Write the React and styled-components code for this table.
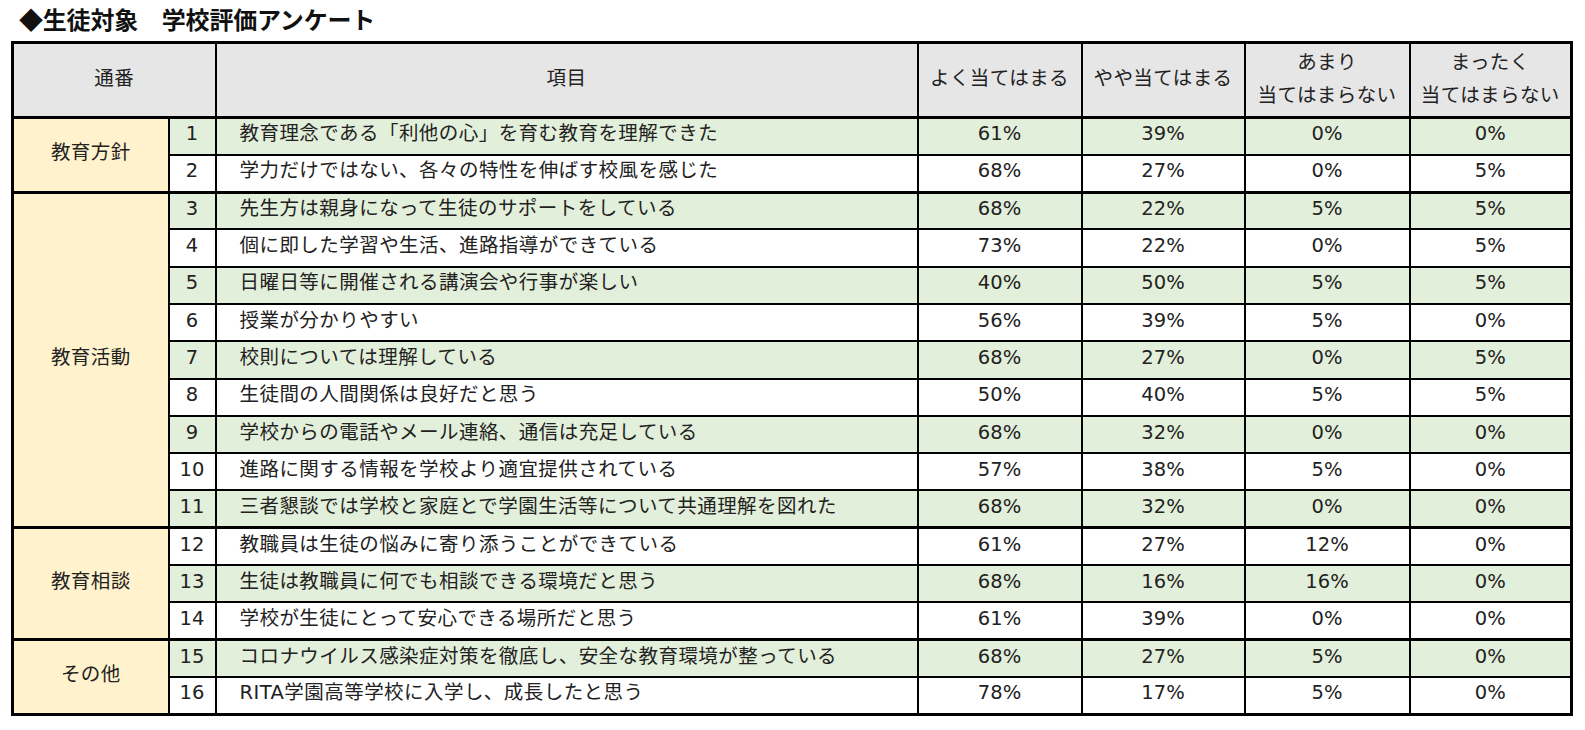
import React from 'react';
import styled, { createGlobalStyle } from 'styled-components';

const GlobalStyle = createGlobalStyle`
  body {
    margin: 0;
    background: #fff;
    font-family: "DejaVu Sans", "Noto Sans CJK JP", sans-serif;
    color: #222;
  }
`;

const groups = [
  {
    name: '教育方針',
    rows: [
      ['教育理念である「利他の心」を育む教育を理解できた', '61%', '39%', '0%', '0%'],
      ['学力だけではない、各々の特性を伸ばす校風を感じた', '68%', '27%', '0%', '5%'],
    ],
  },
  {
    name: '教育活動',
    rows: [
      ['先生方は親身になって生徒のサポートをしている', '68%', '22%', '5%', '5%'],
      ['個に即した学習や生活、進路指導ができている', '73%', '22%', '0%', '5%'],
      ['日曜日等に開催される講演会や行事が楽しい', '40%', '50%', '5%', '5%'],
      ['授業が分かりやすい', '56%', '39%', '5%', '0%'],
      ['校則については理解している', '68%', '27%', '0%', '5%'],
      ['生徒間の人間関係は良好だと思う', '50%', '40%', '5%', '5%'],
      ['学校からの電話やメール連絡、通信は充足している', '68%', '32%', '0%', '0%'],
      ['進路に関する情報を学校より適宜提供されている', '57%', '38%', '5%', '0%'],
      ['三者懇談では学校と家庭とで学園生活等について共通理解を図れた', '68%', '32%', '0%', '0%'],
    ],
  },
  {
    name: '教育相談',
    rows: [
      ['教職員は生徒の悩みに寄り添うことができている', '61%', '27%', '12%', '0%'],
      ['生徒は教職員に何でも相談できる環境だと思う', '68%', '16%', '16%', '0%'],
      ['学校が生徒にとって安心できる場所だと思う', '61%', '39%', '0%', '0%'],
    ],
  },
  {
    name: 'その他',
    rows: [
      ['コロナウイルス感染症対策を徹底し、安全な教育環境が整っている', '68%', '27%', '5%', '0%'],
      ['RITA学園高等学校に入学し、成長したと思う', '78%', '17%', '5%', '0%'],
    ],
  },
];

const Page = styled.div`
  padding: 5px 15px 0 11px;
`;

const Title = styled.h1`
  margin: 0 0 8px 8px;
  font-family: "Noto Sans CJK JP", sans-serif;
  font-size: 24px;
  font-weight: 700;
  line-height: 28px;
  letter-spacing: -0.2px;
  color: #111;
`;

const Table = styled.table`
  border-collapse: collapse;
  width: 1559px;
  table-layout: fixed;
  border: 3px solid #000;
  font-size: 19.5px;
  line-height: 24px;

  td {
    padding-top: 0;
    padding-bottom: 4px;
  }
`;

const Head = styled.th`
  height: 69px;
  padding: 0 0 3px;
  background: #e6e6e6;
  border: 2px solid #000;
  border-bottom-width: 3px;
  font-weight: 400;
  line-height: 33px;
  letter-spacing: 0.4px;
  text-align: center;
  vertical-align: middle;
`;

const Row = styled.tr`
  height: 37.3px;
  background: ${p => (p.$green ? '#e2efda' : '#fff')};
  border-bottom: ${p => (p.$last ? '3px' : '2px')} solid #000;
`;

const Category = styled.td`
  background: #fff2cc;
  border: 2px solid #000;
  border-bottom-width: 3px;
  text-align: center;
  letter-spacing: 0.4px;
  padding-left: 0;
  padding-right: 0;
`;

const Num = styled.td`
  border: 2px solid #000;
  text-align: center;
  padding-left: 0;
  padding-right: 0;
`;

const Item = styled.td`
  border: 2px solid #000;
  padding-left: 23px;
  padding-right: 0;
  letter-spacing: 0.45px;
  white-space: nowrap;
`;

const Pct = styled.td`
  border: 2px solid #000;
  text-align: center;
  padding-left: 0;
  padding-right: 0;
`;

export default function App() {
  let n = 0;
  return (
    <Page>
      <GlobalStyle />
      <Title>◆生徒対象　学校評価アンケート</Title>
      <Table>
        <colgroup>
          <col style={{ width: 156 }} />
          <col style={{ width: 47 }} />
          <col style={{ width: 702 }} />
          <col style={{ width: 164 }} />
          <col style={{ width: 163 }} />
          <col style={{ width: 165 }} />
          <col style={{ width: 162 }} />
        </colgroup>
        <thead>
          <tr>
            <Head colSpan={2}>通番</Head>
            <Head>項目</Head>
            <Head>よく当てはまる</Head>
            <Head>やや当てはまる</Head>
            <Head>あまり<br />当てはまらない</Head>
            <Head>まったく<br />当てはまらない</Head>
          </tr>
        </thead>
        <tbody>
          {groups.map(g =>
            g.rows.map((r, i) => {
              n += 1;
              return (
                <Row key={n} $green={n % 2 === 1} $last={i === g.rows.length - 1}>
                  {i === 0 && <Category rowSpan={g.rows.length}>{g.name}</Category>}
                  <Num>{n}</Num>
                  <Item>{r[0]}</Item>
                  <Pct>{r[1]}</Pct>
                  <Pct>{r[2]}</Pct>
                  <Pct>{r[3]}</Pct>
                  <Pct>{r[4]}</Pct>
                </Row>
              );
            })
          )}
        </tbody>
      </Table>
    </Page>
  );
}
